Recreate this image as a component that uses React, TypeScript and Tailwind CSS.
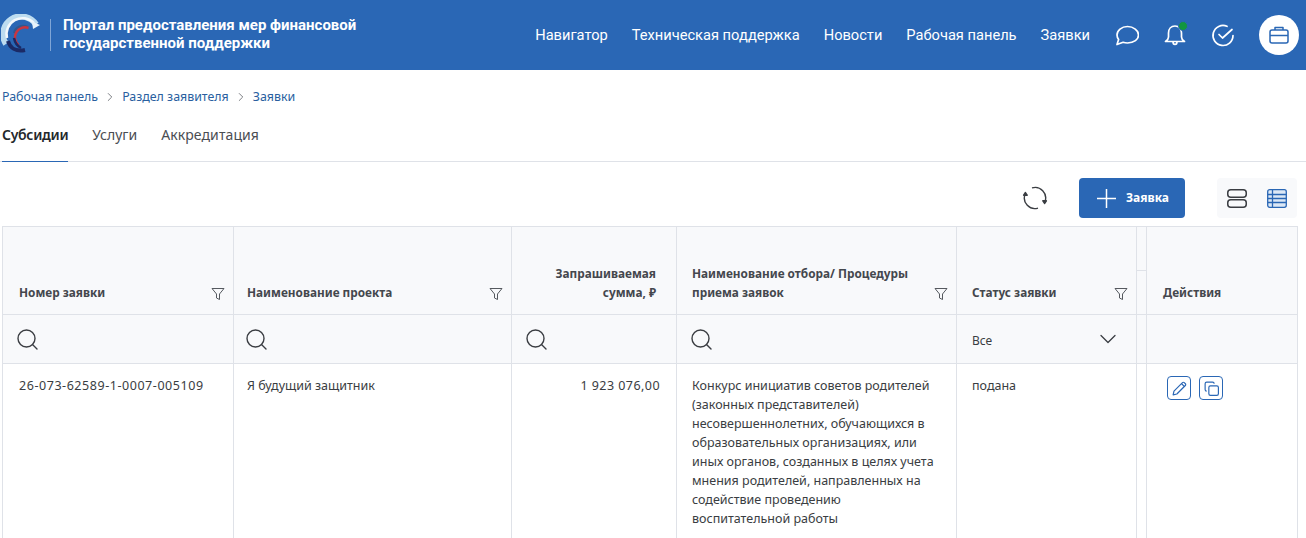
import { ChevronDown, ChevronRight } from "lucide-react";

const navItems = ["Навигатор", "Техническая поддержка", "Новости", "Рабочая панель", "Заявки"];

function Logo() {
  return (
    <svg width="42" height="42" viewBox="0 14 42 42" fill="none" className="shrink-0">
      <path d="M5 44A17.500 17.500 0 0 1 35 24.500" stroke="#bcdcf0" strokeWidth="6" />
      <path d="M6 38A16 16 0 0 1 33 23" stroke="#f2f8fc" strokeWidth="2.500" />
      <path d="M31 21.500L39 25l-7 4z" fill="#e8f3fa" />
      <path d="M27 27A9.500 9.500 0 0 0 13 33" stroke="#33588f" strokeWidth="2" />
      <path d="M27.500 28A10 10 0 0 0 17.500 45" stroke="#c9353f" strokeWidth="2.500" />
      <path d="M7 41C9 48 15 52 24 50" stroke="#1b2a66" strokeWidth="4" />
      <path d="M13 38c1 5 3 8 7 10" stroke="#1b2a66" strokeWidth="2.500" />
    </svg>
  );
}

function FilterIcon() {
  return (
    <svg width="14" height="14" viewBox="0 0 14 14" fill="none" stroke="#55595f" strokeWidth="1" className="shrink-0">
      <path d="M1 1.500h12L8.500 7v5.500L5.500 11V7z" strokeLinejoin="round" />
    </svg>
  );
}

function SearchCell() {
  return (
    <svg width="21" height="21" viewBox="0 0 21 21" fill="none" stroke="#3a3d42" strokeWidth="1.400" strokeLinecap="round" className="block">
      <circle cx="9.500" cy="9.500" r="8.500" />
      <path d="M15.500 15.500l4.500 4.500" />
    </svg>
  );
}

function Th({ text, right, filter, className }: { text: React.ReactNode; right?: boolean; filter?: boolean; className?: string }) {
  return (
    <th className={`border border-[#dfe2e8] bg-[#f8f9fb] pb-3 align-bottom font-bold ${className}`}>
      <div className={`flex items-end justify-between gap-2 ${right ? "text-right" : "text-left"}`}>
        <span className={`text-[11.8px] leading-[19px] text-[#44474d] ${right ? "w-full" : ""}`}>{text}</span>
        {filter && <span className="mb-[1px]"><FilterIcon /></span>}
      </div>
    </th>
  );
}

export default function App() {
  return (
    <div className="h-[538px] overflow-hidden bg-white font-['Noto_Sans',sans-serif]">
      <header className="flex h-[70px] items-center bg-[#2a67b5] pr-[7px] text-white">
        <div className="flex items-center pl-[1px]">
          <Logo />
          <div className="ml-[7px] h-[32px] w-px bg-[#7fa5d6]" />
          <div className="mb-[2px] ml-[12px] font-['Roboto',sans-serif] text-[15px] font-bold leading-[18px]">
            Портал предоставления мер финансовой<br />государственной поддержки
          </div>
        </div>
        <nav className="ml-auto flex items-center gap-6 pt-[1px] font-['Roboto',sans-serif] text-[14.65px]">
          {navItems.map((item) => (
            <span key={item}>{item}</span>
          ))}
        </nav>
        <div className="ml-[25px] flex items-center gap-6">
          <svg width="24" height="24" viewBox="0 0 24 24" fill="none" stroke="white" strokeWidth="1.700">
            <path d="M2 21.500l1.600-5C2.500 15 2 13.500 2 12 2 7.500 6.500 3.500 12.500 3.500S23.500 7.500 23.500 12 19 20 12.500 20c-1.500 0-3-.2-4.400-.7z" strokeLinejoin="round" />
          </svg>
          <div className="relative">
            <svg width="24" height="24" viewBox="0 0 24 24" fill="none" stroke="white" strokeWidth="1.700">
              <path d="M12 3c-4 0-6.500 3-6.500 7v4c0 2-1.500 3.500-3 4.500h19c-1.500-1-3-2.500-3-4.500v-4c0-4-2.500-7-6.500-7z" strokeLinejoin="round" />
              <path d="M10 18.500c0 2 .7 3 2 3s2-1 2-3" />
            </svg>
            <span className="absolute -right-[1px] -top-[2px] h-[10px] w-[10px] rounded-full border border-[#2a67b5] bg-[#12963f]" />
          </div>
          <svg width="24" height="24" viewBox="0 0 24 24" fill="none" stroke="white" strokeWidth="1.700" strokeLinecap="round" strokeLinejoin="round" className="mr-[-1px]">
            <path d="M22 12.500A10 10 0 1 1 16 3.300" />
            <path d="M8 11.500l3.500 3.500L21 6.500" />
          </svg>
        </div>
        <div className="ml-[25px] flex h-[40px] w-[40px] items-center justify-center rounded-full bg-white">
          <svg width="22" height="22" viewBox="0 0 22 22" fill="none" stroke="#2a67b5" strokeWidth="1.500" strokeLinejoin="round">
            <rect x="2" y="6" width="18" height="13" rx="2" />
            <path d="M7 6V3.500h8V6M2 11.500h18" />
          </svg>
        </div>
      </header>

      <div className="flex items-center gap-[5px] pl-[2px] pt-[18px] text-[12.4px] leading-[17px] text-[#2a5f9f]">
        <span>Рабочая панель</span>
        <ChevronRight size={14} strokeWidth={1.300} className="text-[#55595f]" />
        <span>Раздел заявителя</span>
        <ChevronRight size={14} strokeWidth={1.300} className="text-[#55595f]" />
        <span>Заявки</span>
      </div>

      <div className="mt-[12px] flex h-[45px] gap-6 border-b border-[#dfe2e8] pl-[2px] text-sm text-[#4a4d52]">
        <div className="-mb-px border-b border-[#2a67b5] pt-2 font-semibold tracking-[-0.3px] text-[#24272b]">Субсидии</div>
        <div className="pt-2">Услуги</div>
        <div className="pt-2 tracking-[0.1px]">Аккредитация</div>
      </div>

      <div className="flex h-[64px] items-start justify-end pr-[9px] pt-4">
        <div className="mr-[31px] mt-[7px]">
          <svg width="26" height="26" viewBox="0 0 26 26" fill="none" stroke="#3a3d42" strokeWidth="1.400" strokeLinejoin="round">
            <path d="M10 2.900A10.500 10.500 0 0 1 23 16.500" />
            <path d="M20.800 15.800l1.900 2.700 1.700-2.700z" fill="#3a3d42" />
            <path d="M16 23.100A10.500 10.500 0 0 1 3 9.500" />
            <path d="M5.200 10.200L3.300 7.500 1.600 10.200z" fill="#3a3d42" />
          </svg>
        </div>
        <button className="flex h-[40px] w-[106px] items-center gap-[10px] rounded bg-[#2a67b5] pl-[18px] text-xs font-bold text-white">
          <svg width="19" height="19" viewBox="0 0 19 19" stroke="white" strokeWidth="1.500">
            <path d="M9.500 0v19M0 9.500h19" />
          </svg>
          Заявка
        </button>
        <div className="ml-[32px] flex h-[40px] w-[80px] items-center justify-center gap-[20px] rounded bg-[#f8f9fb]">
          <svg width="20" height="19" viewBox="0 0 20 19" fill="none" stroke="#3a3d42" strokeWidth="1.500">
            <rect x="0.750" y="0.750" width="18.500" height="7.500" rx="3" />
            <rect x="0.750" y="10.750" width="18.500" height="7.500" rx="3" />
          </svg>
          <svg width="20" height="19" viewBox="0 0 20 19" fill="none" stroke="#2a67b5" strokeWidth="1.300">
            <rect x="0.700" y="0.700" width="18.600" height="17.600" rx="2" fill="#dce8f6" />
            <path d="M0.700 5.500h18.600M0.700 9.500h18.600M0.700 13.500h18.600M5.500 0.700v17.600" />
          </svg>
        </div>
      </div>

      <div className="pl-[2px]">
        <table className="w-[1295px] table-fixed border-collapse text-[12.5px] text-[#3a3d42]">
          <colgroup>
            <col className="w-[231px]" />
            <col className="w-[278px]" />
            <col className="w-[165px]" />
            <col className="w-[280px]" />
            <col className="w-[180px]" />
            <col className="w-[10px]" />
            <col className="w-[151px]" />
          </colgroup>
          <thead>
            <tr className="h-[88px]">
              <Th text="Номер заявки" filter className="pl-4 pr-2" />
              <Th text="Наименование проекта" filter className="pl-[13px] pr-2" />
              <Th text={<>Запрашиваемая<br />сумма, ₽</>} right className="pl-2 pr-5" />
              <Th text={<>Наименование отбора/ Процедуры<br />приема заявок</>} filter className="pl-[15px] pr-2" />
              <Th text="Статус заявки" filter className="pl-[15px] pr-2" />
              <th className="border border-[#dfe2e8] bg-[#f8f9fb] p-0 align-top">
                <div className="h-[44px] border-b border-[#dfe2e8]" />
              </th>
              <Th text="Действия" className="pl-4" />
            </tr>
            <tr className="h-[49px] bg-[#f8f9fb]">
              <td className="border border-[#dfe2e8] pl-[14px]"><SearchCell /></td>
              <td className="border border-[#dfe2e8] pl-3"><SearchCell /></td>
              <td className="border border-[#dfe2e8] pl-[14px]"><SearchCell /></td>
              <td className="border border-[#dfe2e8] pl-[14px]"><SearchCell /></td>
              <td className="border border-[#dfe2e8] pl-[15px] pr-4">
                <div className="flex items-center justify-between text-xs">
                  <span className="pt-[3px]">Все</span>
                  <ChevronDown size={28} strokeWidth={1.100} className="-mr-[2px]" />
                </div>
              </td>
              <td className="border border-[#dfe2e8]" />
              <td className="border border-[#dfe2e8]" />
            </tr>
          </thead>
          <tbody>
            <tr className="align-top leading-[19px]">
              <td className="border border-[#dfe2e8] px-4 pb-3 pt-3 tracking-[0.55px]">26-073-62589-1-0007-005109</td>
              <td className="border border-[#dfe2e8] pl-[13px] pr-4 pb-3 pt-3">Я будущий защитник</td>
              <td className="border border-[#dfe2e8] px-4 pb-3 pt-3 text-right tracking-[0.45px]">1 923 076,00</td>
              <td className="border border-[#dfe2e8] pl-[15px] pr-4 pb-3 pt-3">
                Конкурс инициатив советов родителей (законных представителей) несовершеннолетних, обучающихся в образовательных организациях, или иных органов, созданных в целях учета мнения родителей, направленных на содействие проведению воспитательной работы
              </td>
              <td className="border border-[#dfe2e8] pl-[15px] pr-4 pb-3 pt-3">подана</td>
              <td className="border border-[#dfe2e8]" />
              <td className="border border-[#dfe2e8] pl-5 pt-3">
                <div className="flex gap-2">
                  <span className="flex h-[24px] w-[24px] items-center justify-center rounded border border-[#2a67b5]">
                    <svg width="17" height="17" viewBox="0 0 16 16" fill="none" stroke="#2a67b5" strokeWidth="1.100" strokeLinejoin="round">
                      <path d="M2 14l.8-3.500 8-8a1.200 1.200 0 0 1 1.700 0l1 1a1.200 1.200 0 0 1 0 1.700l-8 8z" />
                      <path d="M10 3.500l2.500 2.500" />
                    </svg>
                  </span>
                  <span className="flex h-[24px] w-[24px] items-center justify-center rounded border border-[#2a67b5]">
                    <svg width="17" height="17" viewBox="0 0 16 16" fill="none" stroke="#2a67b5" strokeWidth="1.100">
                      <rect x="5.500" y="5.500" width="9" height="9" rx="1.500" />
                      <path d="M3.500 10.500A1.500 1.500 0 0 1 2 9V3.500A1.500 1.500 0 0 1 3.500 2H9a1.500 1.500 0 0 1 1.500 1.500" />
                    </svg>
                  </span>
                </div>
              </td>
            </tr>
          </tbody>
        </table>
      </div>
    </div>
  );
}
